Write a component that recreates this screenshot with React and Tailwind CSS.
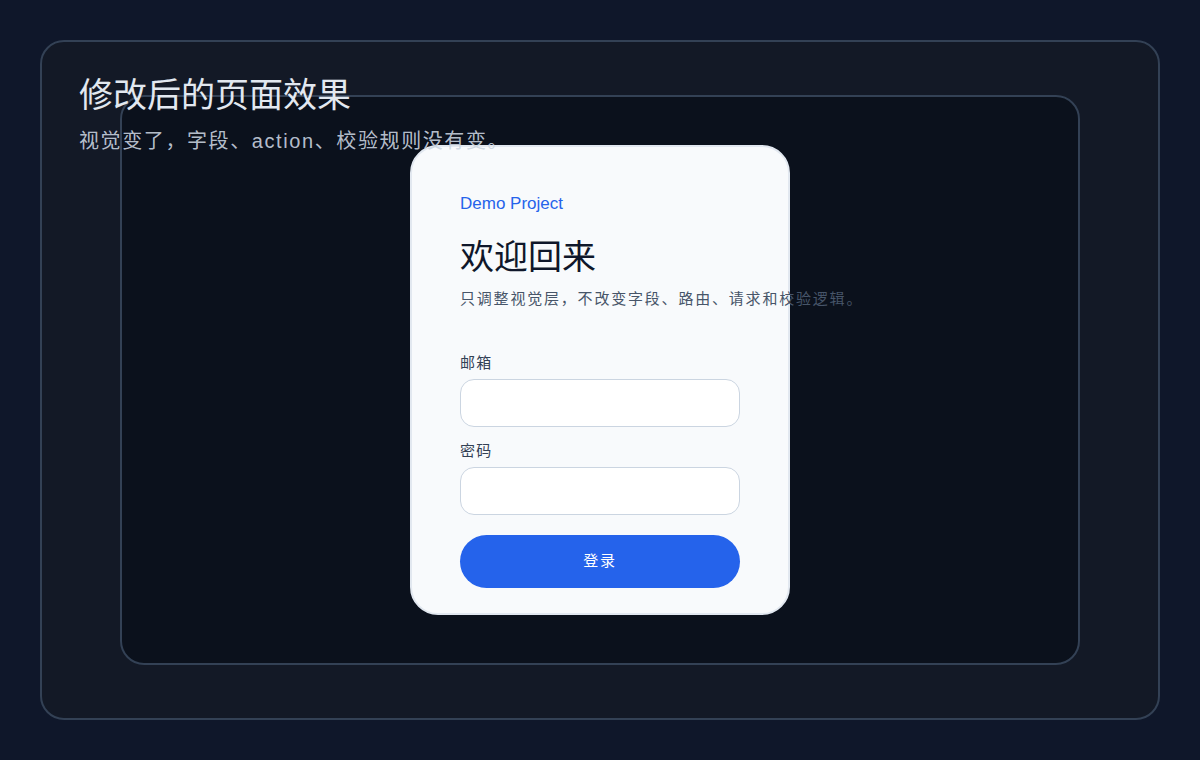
export default function App() {
  return (
    <div
      className="min-h-[760px] w-full bg-[#0f172a] p-10"
      style={{ fontFamily: '"Liberation Sans", "Noto Sans CJK SC", sans-serif' }}
    >
      {/* outer frame */}
      <div className="relative flex h-[680px] items-center justify-center rounded-[24px] border-2 border-[#334155] bg-[#131926]">
        <div className="absolute left-[37px] top-[29px] z-10">
          <h1 className="text-[34px] leading-[48px] text-[#e2e8f0]">修改后的页面效果</h1>
          <p className="mt-[8px] text-[20px] leading-[28px] tracking-[1.6px] text-[#cbd5e1]/90">
            视觉变了，字段、action、校验规则没有变。
          </p>
        </div>

        {/* inner frame */}
        <div className="flex h-[570px] w-[960px] items-center justify-center rounded-[24px] border-2 border-[#334155] bg-[#0b111c]">
          {/* login card */}
          <div className="h-[470px] w-[380px] rounded-[28px] border-2 border-[#e2e8f0] bg-[#f8fafc] px-[48px] pt-[45px]">
            <p className="text-[17px] leading-[24px] text-[#2563eb]">Demo Project</p>
            <h2 className="mt-[21px] text-[34px] leading-[40px] text-[#0f172a]">欢迎回来</h2>
            <p className="mt-[10px] whitespace-nowrap text-[15px] leading-[24px] tracking-[0.12em] text-[#475569]">
              只调整视觉层，不改变字段、路由、请求和校验逻辑。
            </p>

            <form className="mt-[41px] flex flex-col" onSubmit={(e) => e.preventDefault()}>
              <label className="text-[15px] leading-[22px] tracking-[0.08em] text-[#334155]">邮箱</label>
              <input
                type="email"
                className="mt-[5px] h-[48px] w-full rounded-[14px] border border-[#cbd5e1] bg-white px-4 outline-none"
              />
              <label className="mt-[13px] text-[15px] leading-[22px] tracking-[0.08em] text-[#334155]">密码</label>
              <input
                type="password"
                className="mt-[5px] h-[48px] w-full rounded-[14px] border border-[#cbd5e1] bg-white px-4 outline-none"
              />
              <button
                type="submit"
                className="mt-[20px] h-[53px] w-full rounded-full bg-[#2563eb] text-[15px] tracking-[0.12em] text-white"
              >
                登录
              </button>
            </form>
          </div>
        </div>
      </div>
    </div>
  )
}
